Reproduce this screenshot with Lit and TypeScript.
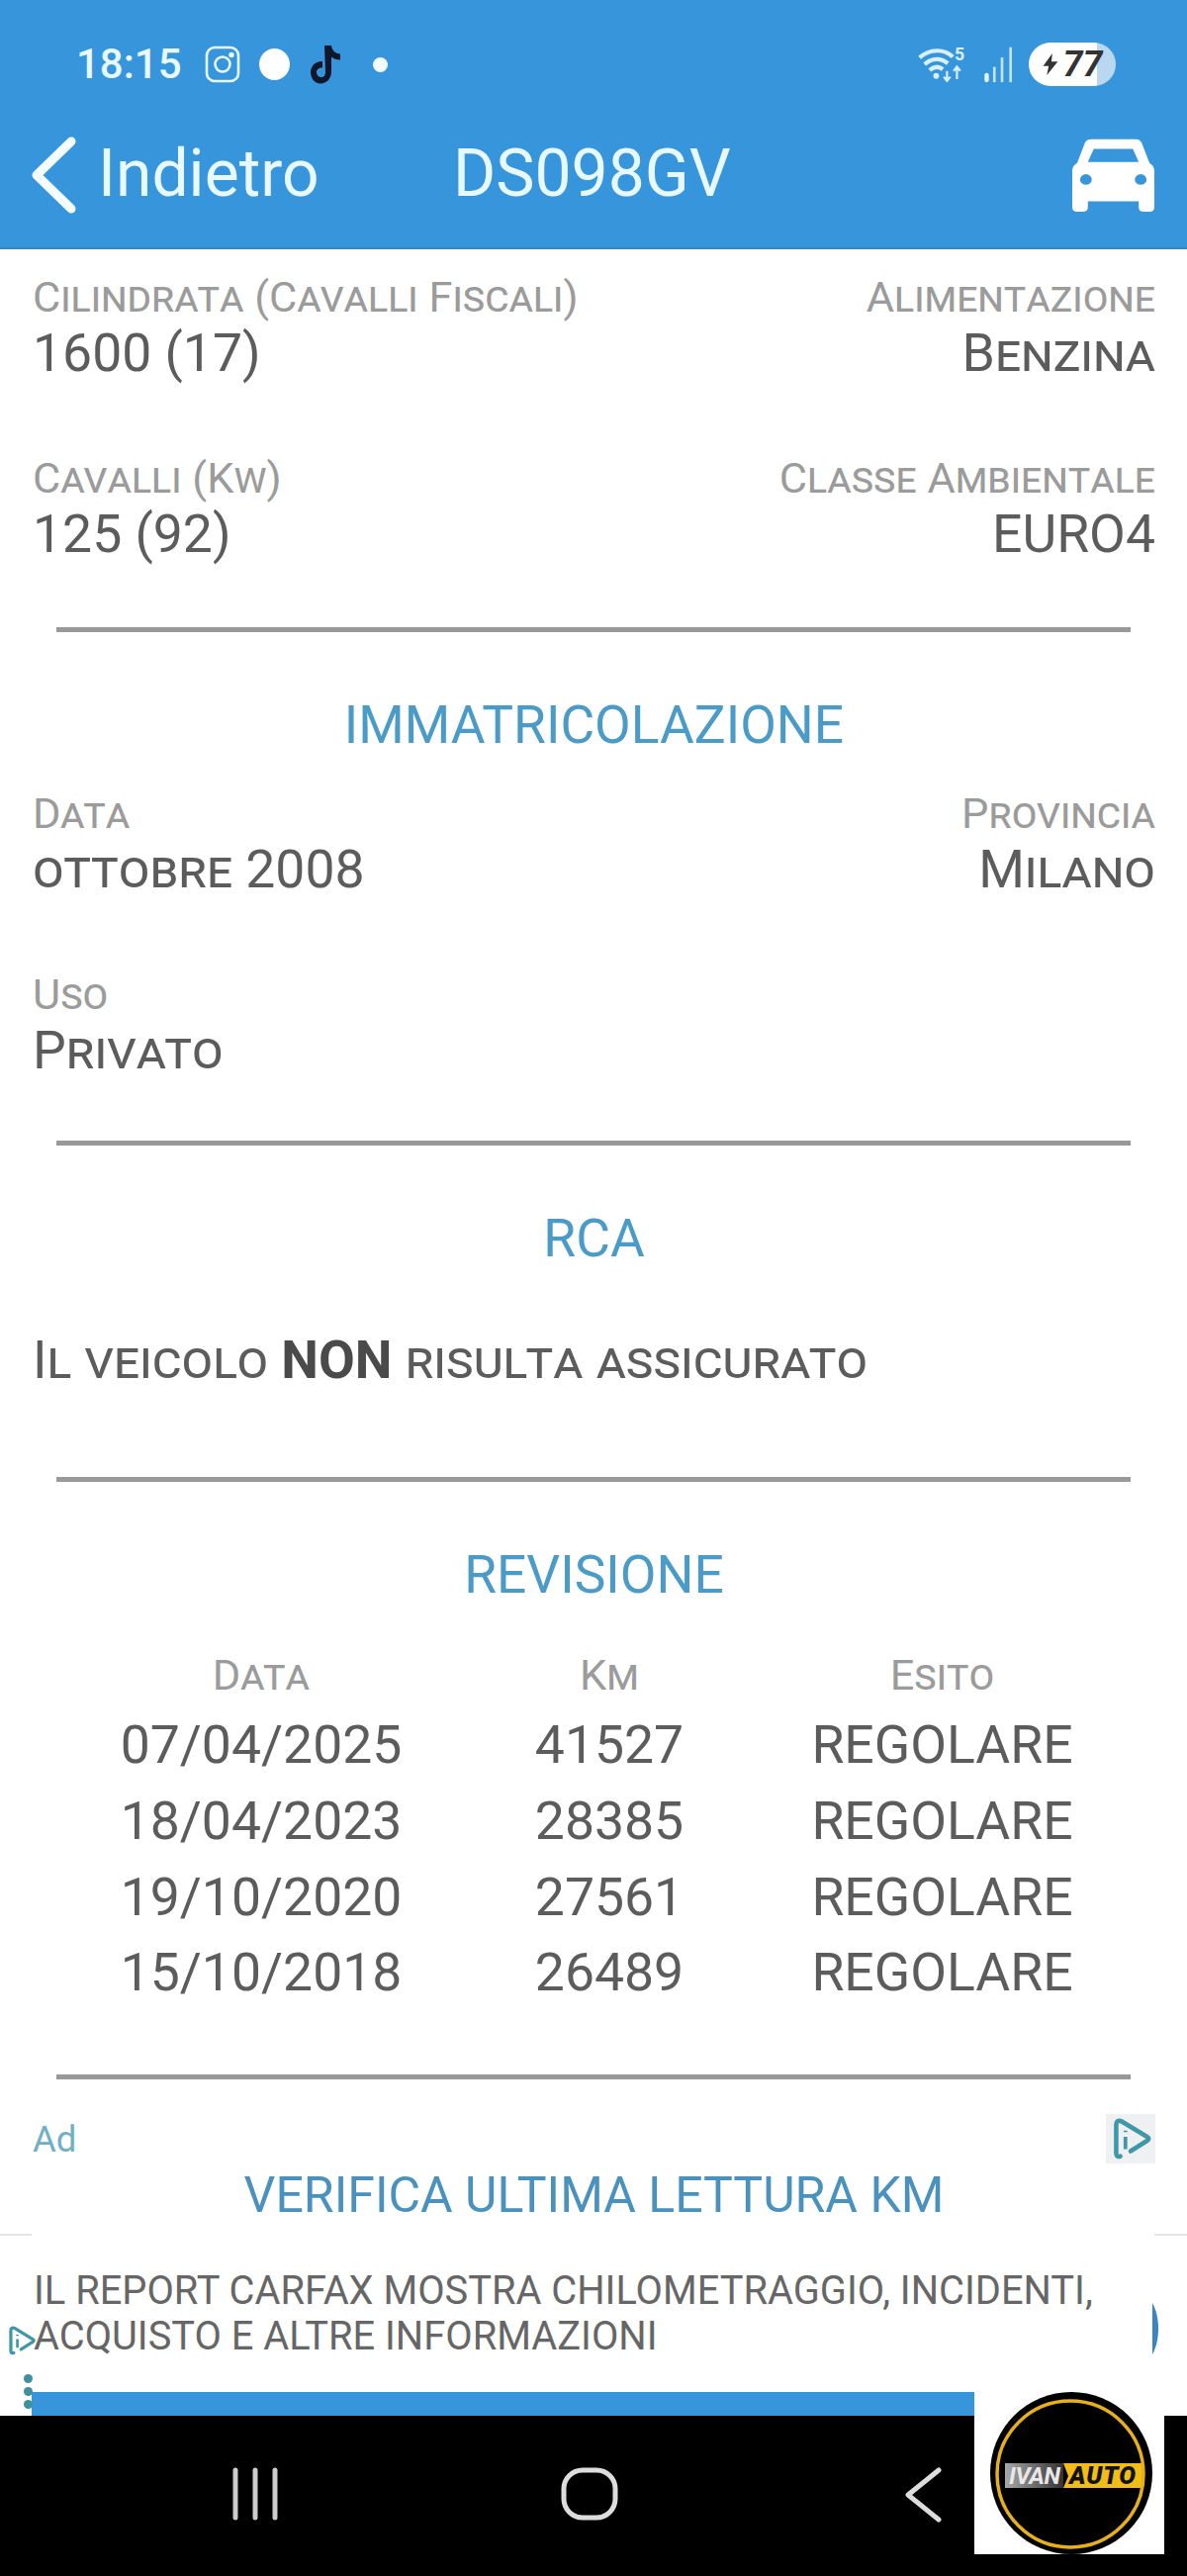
import { LitElement, html, css, svg } from "lit";
import { customElement } from "lit/decorators.js";

const revisions = [
  ["07/04/2025", "41527", "REGOLARE"],
  ["18/04/2023", "28385", "REGOLARE"],
  ["19/10/2020", "27561", "REGOLARE"],
  ["15/10/2018", "26489", "REGOLARE"],
];

const adIcon = svg`<path d="M7 20.500C5.500 21 5 20 5 19V5c0-1.500 1-2 2.500-1.500L20 11c1 .6 1 1.400 0 2l-8 5" fill="none" stroke="#3f97a8" stroke-width="2.200" stroke-linecap="round" stroke-linejoin="round"/><path d="M9.500 11v6M9.500 8v.8" stroke="#3f97a8" stroke-width="1.800"/>`;

@customElement("app-root")
export class AppRoot extends LitElement {
  static styles = css`
    :host {
      display: flex;
      flex-direction: column;
      width: 1200px;
      height: 2604px;
      overflow: hidden;
      position: relative;
      background: #fff;
      font-family: Roboto, "Liberation Sans", sans-serif;
    }
    .header {
      height: 252px;
      flex: none;
      box-sizing: border-box;
      background: #3796db;
      border-bottom: 2px solid #3a87bb;
      color: #e8f8ff;
    }
    .status {
      height: 130px;
      box-sizing: border-box;
      padding: 43px 72px 0 77px;
      display: flex;
      align-items: flex-start;
    }
    .time {
      font-size: 42px;
      line-height: 44px;
      font-weight: 500;
      margin-right: 4px;
    }
    .status-left {
      display: flex;
      align-items: center;
      gap: 19px;
      height: 44px;
    }
    .status-right {
      margin-left: auto;
      display: flex;
      align-items: center;
      gap: 13px;
      height: 44px;
    }
    .dot-l {
      width: 31px;
      height: 32px;
      border-radius: 50%;
      background: #fff;
    }
    .dot-s {
      width: 15px;
      height: 15px;
      border-radius: 50%;
      background: #f2fbff;
      margin-left: 12px;
    }
    .battery {
      width: 88px;
      height: 44px;
      border-radius: 22px;
      background: linear-gradient(90deg, #fff 78%, #b9d7ef 78%);
      display: flex;
      align-items: center;
      justify-content: center;
      gap: 3px;
      color: #333;
      font-size: 36px;
      font-weight: 700;
      font-style: italic;
    }
    .nav {
      display: flex;
      align-items: center;
      height: 94px;
      padding: 0 31px;
    }
    .back {
      font-size: 66px;
      line-height: 90px;
      margin: -3px 0 0 20px;
      width: 359px;
    }
    .plate {
      font-size: 66px;
      line-height: 90px;
      margin-top: -3px;
    }
    .car {
      margin-left: auto;
      margin-right: 1px;
    }
    .content {
      flex: 1;
      min-height: 0;
      position: relative;
      padding: 24px 32px 0 33px;
      color: #555;
    }
    .pairs {
      display: grid;
      grid-template-columns: 1fr 1fr;
      row-gap: 71px;
    }
    .pair.right {
      text-align: right;
    }
    .label {
      font-size: 43.4px;
      line-height: 50px;
      color: #9b9b9b;
      font-variant: small-caps;
      white-space: nowrap;
    }
    .value {
      font-size: 53.5px;
      line-height: 62px;
      color: #5c5c5c;
      white-space: nowrap;
    }
    .value.caps {
      font-variant: small-caps;
    }
    hr {
      border: none;
      height: 5px;
      background: #999;
      margin: 0 25px 0 24px;
    }
    .title {
      text-align: center;
      font-size: 53.3px;
      line-height: 60px;
      color: #4a9bc8;
    }
    .notice {
      font-size: 53.4px;
      line-height: 62px;
      font-variant: small-caps;
      color: #5c5c5c;
    }
    .notice b {
      font-weight: 700;
      color: #4a4a4a;
    }
    .table {
      display: grid;
      grid-template-columns: 462px 242px 1fr;
    }
    .table .cell {
      text-align: center;
      font-size: 53.5px;
      line-height: 76.8px;
      color: #5c5c5c;
      white-space: nowrap;
    }
    .table .th {
      font-size: 43.4px;
      line-height: 64px;
      font-variant: small-caps;
      color: #9b9b9b;
    }
    .ad-head {
      display: flex;
      justify-content: space-between;
      align-items: center;
      height: 50px;
      margin-top: 35px;
    }
    .ad-label {
      font-size: 36.500px;
      color: #6fb0c4;
    }
    .ad-icon {
      width: 50px;
      height: 50px;
      background: #eef0f2;
    }
    .ad-title {
      text-align: center;
      font-size: 50px;
      line-height: 60px;
      color: #4a92bd;
      margin-top: 2px;
    }
    .ad-box {
      position: absolute;
      left: 0;
      right: 0;
      bottom: 0;
      height: 184px;
      border-top: 2px solid #e4e4e4;
      box-sizing: border-box;
    }
    .ad-inner {
      position: absolute;
      inset: -2px 33px 0 32px;
      background: #fff;
      padding: 35px 0 0 2px;
      font-size: 39.8px;
      line-height: 46px;
      color: #666;
      white-space: nowrap;
    }
    .ad-inner .bar {
      position: absolute;
      left: 0;
      right: 0;
      bottom: 0;
      height: 24px;
      background: #3796db;
    }
    .ad-i2 {
      position: absolute;
      left: 8px;
      top: 84px;
    }
    .ad-dots {
      position: absolute;
      left: 24px;
      top: 140px;
      display: flex;
      flex-direction: column;
      gap: 4px;
    }
    .ad-dots i {
      width: 9px;
      height: 9px;
      border-radius: 50%;
      background: #3f8f9e;
    }
    .ad-next {
      position: absolute;
      right: 25px;
      top: 68px;
    }
    .softkeys {
      height: 162px;
      flex: none;
      background: #000;
      display: flex;
      align-items: flex-start;
      padding: 52px 0 0 235px;
      box-sizing: border-box;
    }
    .softkeys svg {
      flex: none;
    }
    .logo {
      position: absolute;
      left: 985px;
      top: 2418px;
      width: 192px;
      height: 164px;
      background: #fff;
    }
  `;

  private pair(label: string, value: string, right = false, caps = false) {
    return html`<div class="pair ${right ? "right" : ""}">
      <div class="label">${label}</div>
      <div class="value ${caps ? "caps" : ""}">${value}</div>
    </div>`;
  }

  render() {
    return html`
      <div class="header">
        <div class="status">
          <div class="status-left">
            <span class="time">18:15</span>
            <svg width="36" height="38" viewBox="0 0 36 38" fill="none" stroke="#e8f8ff" stroke-width="2.600">
              <rect x="2" y="2" width="32" height="34" rx="8"/><circle cx="18" cy="19" r="7.500"/><circle cx="27" cy="9.500" r="1.400" fill="#e8f8ff"/>
            </svg>
            <span class="dot-l"></span>
            <svg width="34" height="44" viewBox="0 0 34 44">
              <path d="M16 3h7c.5 5 4 8 9 8.500v6c-4 0-7-1-9-3v15c0 7-5 12-11 12S2 36 2 30s5-11.500 12-11v6.500c-3-.5-6 1.500-6 4.500s2.500 5 5 5 4-2 4-5z" fill="#10162c"/>
            </svg>
            <span class="dot-s"></span>
          </div>
          <div class="status-right">
            <svg width="52" height="38" viewBox="0 0 62 44" fill="none" stroke="#d8f0fd">
              <path d="M2 14C14 3 32 3 42 13M8 22C17 14 28 14 36 21M14 29C20 24 26 25 30 28" stroke-width="5"/>
              <circle cx="22" cy="36" r="3.500" fill="#d8f0fd" stroke="none"/>
              <text x="44" y="17" font-size="21" font-family="Roboto" fill="#d8f0fd" stroke="none" font-weight="700">5</text>
              <path d="M35 30v12M31 37l4 5 4-5M47 40V26M43 30l4-5 4 5" stroke-width="2.600"/>
            </svg>
            <svg width="34" height="38" viewBox="0 0 36 44" fill="#c4e4f8">
              <rect x="1" y="32" width="5" height="11" rx="2.500" fill="#e8f8ff"/><rect x="11" y="25" width="3" height="18"/><rect x="20" y="14" width="3" height="29"/><rect x="30" y="2" width="3" height="41"/>
            </svg>
            <div class="battery">
              <svg width="18" height="24" viewBox="0 0 18 26"><path d="M11 1 1 15h6l-2 10 12-15h-7z" fill="#333"/></svg>
              <span>77</span>
            </div>
          </div>
        </div>
        <div class="nav">
          <svg width="48" height="78" viewBox="0 0 48 78" fill="none" stroke="#f4fcff" stroke-width="9" stroke-linecap="round" stroke-linejoin="round">
            <path d="M41 5 6 39l35 34"/>
          </svg>
          <span class="back">Indietro</span>
          <span class="plate">DS098GV</span>
          <svg class="car" width="85" height="76" viewBox="0 0 86 86" preserveAspectRatio="none" fill="#fff">
            <path fill-rule="evenodd" d="M20 2h46c3 0 5 2 6 4l8 23c3 2 5 5 5 9v42c0 3-2 5-5 5h-6c-3 0-5-2-5-5v-7H17v7c0 3-2 5-5 5H6c-3 0-5-2-5-5V38c0-4 2-7 5-9l8-23c1-2 3-4 6-4zm3 11-6 15h52l-6-15zM15 42a6 6 0 1 0 0 12 6 6 0 0 0 0-12zm56 0a6 6 0 1 0 0 12 6 6 0 0 0 0-12z"/>
          </svg>
        </div>
      </div>

      <div class="content">
        <div class="pairs">
          ${this.pair("Cilindrata (Cavalli Fiscali)", "1600 (17)")}
          ${this.pair("Alimentazione", "Benzina", true, true)}
          ${this.pair("Cavalli (Kw)", "125 (92)")}
          ${this.pair("Classe Ambientale", "EURO4", true)}
        </div>
        <hr style="margin-top:63px" />
        <div class="title" style="margin-top:64px">IMMATRICOLAZIONE</div>
        <div class="pairs" style="margin-top:35px">
          ${this.pair("Data", "ottobre 2008", false, true)}
          ${this.pair("Provincia", "Milano", true, true)}
          ${this.pair("Uso", "Privato", false, true)}
        </div>
        <hr style="margin-top:60px" />
        <div class="title" style="margin-top:64px">RCA</div>
        <div class="notice" style="margin-top:62px">Il veicolo <b>NON</b> risulta assicurato</div>
        <hr style="margin-top:87px" />
        <div class="title" style="margin-top:64px">REVISIONE</div>
        <div class="table" style="margin-top:40px">
          <div class="cell th">Data</div>
          <div class="cell th">Km</div>
          <div class="cell th">Esito</div>
          ${revisions.map(
            (r) => html`
              <div class="cell">${r[0]}</div>
              <div class="cell">${r[1]}</div>
              <div class="cell">${r[2]}</div>
            `
          )}
        </div>
        <hr style="margin-top:64px" />
        <div class="ad-head">
          <span class="ad-label">Ad</span>
          <svg class="ad-icon" viewBox="0 0 24 24">${adIcon}</svg>
        </div>
        <div class="ad-title">VERIFICA ULTIMA LETTURA KM</div>
        <div class="ad-box">
          <div class="ad-inner">
            IL REPORT CARFAX MOSTRA CHILOMETRAGGIO, INCIDENTI,<br />ACQUISTO E ALTRE INFORMAZIONI
            <div class="bar"></div>
          </div>
          <svg class="ad-i2" width="28" height="44" viewBox="3 1 19 22">${adIcon}</svg>
          <div class="ad-dots"><i></i><i></i><i></i></div>
          <svg class="ad-next" width="10" height="52" viewBox="0 0 10 52"><path d="M0 0c8 14 8 38 0 52z" fill="#3a85c4"/></svg>
        </div>
      </div>

      <div class="softkeys">
        <svg width="46" height="54" viewBox="0 0 46 54" fill="none" stroke="#ccc" stroke-width="5" stroke-linecap="round">
          <path d="M3 3v48M23 3v48M43 3v48"/>
        </svg>
        <svg style="margin-left:286px" width="58" height="54" viewBox="0 0 58 54" fill="none" stroke="#ddd" stroke-width="5">
          <rect x="3" y="3" width="52" height="48" rx="19"/>
        </svg>
        <svg style="margin-left:289px" width="42" height="56" viewBox="0 0 42 56" fill="none" stroke="#ddd" stroke-width="5" stroke-linecap="round" stroke-linejoin="round">
          <path d="M35 3 4 28l31 25"/>
        </svg>
      </div>

      <div class="logo">
        <svg width="192" height="164" viewBox="0 0 192 164">
          <defs>
            <linearGradient id="g" x1="0" x2="1"><stop offset="0" stop-color="#a8a8a8"/><stop offset="1" stop-color="#333"/></linearGradient>
          </defs>
          <circle cx="98" cy="82" r="82" fill="#000"/>
          <rect x="31" y="72" width="59" height="25" fill="url(#g)"/>
          <path d="M90 97l5-12-5-13h80v25z" fill="#f2bd17"/>
          <circle cx="97" cy="83" r="74" fill="none" stroke="#e5b01e" stroke-width="3.500"/>
          <text x="35" y="93" font-size="24" font-weight="700" font-style="italic" fill="#e8e8e8" font-family="Roboto" textLength="52">IVAN</text>
          <text x="96" y="93" font-size="25" font-weight="900" font-style="italic" fill="#111" font-family="Roboto" textLength="67">AUTO</text>
        </svg>
      </div>
    `;
  }
}
